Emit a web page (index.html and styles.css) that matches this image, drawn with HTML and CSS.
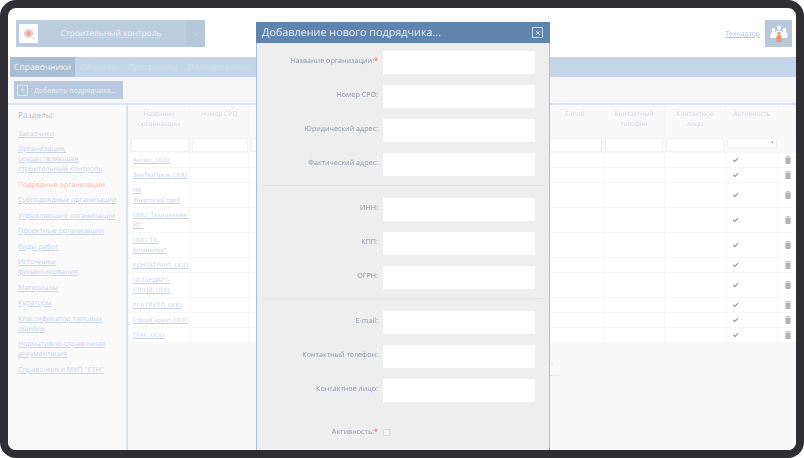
FILE: index.html
```html
<!DOCTYPE html>
<html lang="ru">
<head>
<meta charset="utf-8">
<title>Добавление нового подрядчика</title>
<link rel="stylesheet" href="styles.css">
</head>
<body>
<svg class="defs" width="0" height="0" aria-hidden="true">
  <symbol id="check" viewBox="0 0 8 7"><path d="M.6 3.900 2 2.800l1.200 1.400L6.600.8 7.600 1.800 3.200 6.400z"/></symbol>
  <symbol id="trash" viewBox="0 0 6 8"><path d="M2 0h2v.7h2v.8H0V.7h2zM.4 2h5.200v5.200c0 .5-.3.8-.8.8H1.200c-.5 0-.8-.3-.8-.8z"/></symbol>
</svg>
<div class="frame">
  <div class="app">
    <header class="top">
      <div class="project">
        <span class="logo">
          <svg width="12" height="12" viewBox="0 0 12 12"><circle cx="5.500" cy="5.500" r="4.600" fill="#f3cfc9"/><circle cx="5.500" cy="5.500" r="2.400" fill="#e9a79c"/><path d="M9 9l2.400 2.200" stroke="#dde3ea" stroke-width="1.300"/></svg>
        </span>
        <a class="project-name">Строительный контроль</a>
        <span class="project-arrow"><svg width="7" height="4" viewBox="0 0 7 4"><path d="M.5.5 3.500 3l3-2.500" fill="none" stroke="#c6d3e1" stroke-width=".8"/></svg></span>
      </div>
      <div class="user">
        <a class="user-name">Технадзор</a>
        <span class="avatar">
          <svg width="20" height="20" viewBox="0 0 20 20">
            <circle cx="4.500" cy="6" r="1.900" fill="#fff"/><path d="M1.500 14V10c0-1 .9-1.900 3-1.900s3 .9 3 1.900v4z" fill="#fff"/>
            <circle cx="15.500" cy="6" r="1.900" fill="#fff"/><path d="M12.500 14V10c0-1 .9-1.900 3-1.900s3 .9 3 1.900v4z" fill="#fff"/>
            <circle cx="10" cy="3.800" r="2" fill="#fff"/><path d="M6.500 9c0-1.500 1.500-2.500 3.500-2.500s3.500 1 3.500 2.500v2h-7z" fill="#fff"/>
            <circle cx="10" cy="9.500" r="1.800" fill="#f0a587"/><path d="M7.300 18v-3.800c0-1.500 1.200-2.500 2.700-2.500s2.700 1 2.700 2.500V18z" fill="#ee9572"/>
          </svg>
        </span>
      </div>
    </header>
    <nav class="nav">
      <a class="tab tab-active">Справочники</a>
      <a class="tab">Объекты</a>
      <a class="tab">Программы</a>
      <a class="tab">Планирование</a>
    </nav>
    <div class="toolbar">
      <button class="add" type="button"><span class="plus">+</span>Добавить подрядчика...</button>
    </div>
    <div class="main">
      <aside class="side">
        <h2 class="side-title">Разделы:</h2>
        <a class="side-link">Заказчики</a>
        <a class="side-link">Организация,<br>осуществляющая<br>строительный контроль</a>
        <a class="side-link side-current">Подрядные организации</a>
        <a class="side-link">Субподрядные организации</a>
        <a class="side-link">Управляющие организации</a>
        <a class="side-link">Проектные организации</a>
        <a class="side-link">Виды работ</a>
        <a class="side-link">Источники<br>финансирования</a>
        <a class="side-link">Материалы</a>
        <a class="side-link">Кураторы</a>
        <a class="side-link">Классификатор типовых<br>ошибок</a>
        <a class="side-link">Нормативно-справочная<br>документация</a>
        <a class="side-link">Справочники МУП "СТН"</a>
      </aside>
      <section class="content">
        <table class="grid">
          <colgroup>
            <col class="w-name"><col class="w-mid"><col class="w-mid"><col class="w-mid"><col class="w-mid"><col class="w-mid"><col class="w-mid">
            <col class="w-mail"><col class="w-name"><col class="w-name"><col class="w-act"><col class="w-del">
          </colgroup>
          <thead>
            <tr class="head">
              <th>Название организации</th><th>Номер СРО</th><th>Юридический адрес</th><th>Фактический адрес</th><th>ИНН</th><th>КПП</th><th>ОГРН</th><th>E-mail</th><th>Контактный телефон</th><th>Контактное лицо</th><th>Активность</th><th></th>
            </tr>
            <tr class="filters">
              <td><span class="filter"></span></td><td><span class="filter"></span></td><td><span class="filter"></span></td><td><span class="filter"></span></td><td><span class="filter"></span></td><td><span class="filter"></span></td><td><span class="filter"></span></td><td><span class="filter"></span></td><td><span class="filter"></span></td><td><span class="filter"></span></td>
              <td><span class="filter filter-select">▾</span></td><td></td>
            </tr>
          </thead>
          <tbody>
            <tr><td><a>Антекс, ООО</a></td><td></td><td></td><td></td><td></td><td></td><td></td><td></td><td></td><td></td><td class="act"><svg class="ico-check"><use href="#check"/></svg></td><td class="del"><svg class="ico-trash"><use href="#trash"/></svg></td></tr>
            <tr><td><a>ЗемТехПром, ООО</a></td><td></td><td></td><td></td><td></td><td></td><td></td><td></td><td></td><td></td><td class="act"><svg class="ico-check"><use href="#check"/></svg></td><td class="del"><svg class="ico-trash"><use href="#trash"/></svg></td></tr>
            <tr><td><a>НК<br>ЭнергогазСтрой</a></td><td></td><td></td><td></td><td></td><td></td><td></td><td></td><td></td><td></td><td class="act"><svg class="ico-check"><use href="#check"/></svg></td><td class="del"><svg class="ico-trash"><use href="#trash"/></svg></td></tr>
            <tr><td><a>ООО "Технохимия-<br>ИС"</a></td><td></td><td></td><td></td><td></td><td></td><td></td><td></td><td></td><td></td><td class="act"><svg class="ico-check"><use href="#check"/></svg></td><td class="del"><svg class="ico-trash"><use href="#trash"/></svg></td></tr>
            <tr><td><a>ООО "ГК<br>Биовектор"</a></td><td></td><td></td><td></td><td></td><td></td><td></td><td></td><td></td><td></td><td class="act"><svg class="ico-check"><use href="#check"/></svg></td><td class="del"><svg class="ico-trash"><use href="#trash"/></svg></td></tr>
            <tr><td><a>КОНТАТРАНТ, ООО</a></td><td></td><td></td><td></td><td></td><td></td><td></td><td></td><td></td><td></td><td class="act"><svg class="ico-check"><use href="#check"/></svg></td><td class="del"><svg class="ico-trash"><use href="#trash"/></svg></td></tr>
            <tr><td><a>ОСТАНДАРТ-<br>СТРОЙ, ООО</a></td><td></td><td></td><td></td><td></td><td></td><td></td><td></td><td></td><td></td><td class="act"><svg class="ico-check"><use href="#check"/></svg></td><td class="del"><svg class="ico-trash"><use href="#trash"/></svg></td></tr>
            <tr><td><a>РСА ГРУПП, ООО</a></td><td></td><td></td><td></td><td></td><td></td><td></td><td></td><td></td><td></td><td class="act"><svg class="ico-check"><use href="#check"/></svg></td><td class="del"><svg class="ico-trash"><use href="#trash"/></svg></td></tr>
            <tr><td><a>СтройГарант, ООО</a></td><td></td><td></td><td></td><td></td><td></td><td></td><td></td><td></td><td></td><td class="act"><svg class="ico-check"><use href="#check"/></svg></td><td class="del"><svg class="ico-trash"><use href="#trash"/></svg></td></tr>
            <tr><td><a>ТРАС, ООО</a></td><td></td><td></td><td></td><td></td><td></td><td></td><td></td><td></td><td></td><td class="act"><svg class="ico-check"><use href="#check"/></svg></td><td class="del"><svg class="ico-trash"><use href="#trash"/></svg></td></tr>
          </tbody>
        </table>
        <div class="pager"><span class="pager-text">5</span></div>
      </section>
    </div>
  </div>
  <div class="modal">
    <div class="modal-head">
      <span class="modal-title">Добавление нового подрядчика...</span>
      <span class="modal-close"><svg width="6" height="6" viewBox="0 0 6 6"><path d="M1 1l4 4M5 1 1 5" stroke="#e8eef5" stroke-width=".9"/></svg></span>
    </div>
    <form class="modal-body">
      <div class="group">
        <label class="field"><span class="label">Название организации:<b class="req">*</b></span><input class="input" type="text"></label>
        <label class="field"><span class="label">Номер СРО:</span><input class="input" type="text"></label>
        <label class="field"><span class="label">Юридический адрес:</span><input class="input" type="text"></label>
        <label class="field"><span class="label">Фактический адрес:</span><input class="input" type="text"></label>
      </div>
      <div class="group">
        <label class="field"><span class="label">ИНН:</span><input class="input" type="text"></label>
        <label class="field"><span class="label">КПП:</span><input class="input" type="text"></label>
        <label class="field"><span class="label">ОГРН:</span><input class="input" type="text"></label>
      </div>
      <div class="group group-last">
        <label class="field"><span class="label">E-mail:</span><input class="input" type="text"></label>
        <label class="field"><span class="label">Контактный телефон:</span><input class="input" type="text"></label>
        <label class="field"><span class="label">Контактное лицо:</span><input class="input" type="text"></label>
      </div>
      <label class="field field-check"><span class="label">Активность:<b class="req">*</b></span><span class="checkbox"></span></label>
    </form>
  </div>
</div>
</body>
</html>
```

FILE: styles.css
```css
* { box-sizing: border-box; }
html, body { margin: 0; padding: 0; background: #fff; }
body { width: 804px; height: 458px; overflow: hidden; font-family: "Open Sans", "Noto Sans", sans-serif; text-rendering: geometricPrecision; }
.defs { position: absolute; }
a { cursor: pointer; }

.frame {
  position: relative;
  width: 804px;
  height: 458px;
  border: 8px solid #2f2e33;
  border-radius: 16px;
  overflow: hidden;
  background: #fff;
}
.app { display: flex; flex-direction: column; height: 442px; filter: blur(.3px); }

.top { height: 49px; flex: none; display: flex; justify-content: space-between; padding: 12px 4px 0 8px; }
.project { width: 189px; height: 27px; background: #bccddf; display: flex; align-items: center; }
.logo { width: 19px; height: 19px; margin-left: 3px; background: #fff; display: flex; align-items: center; justify-content: center; }
.project-name { flex: 1; padding-right: 2px; text-align: center; font-size: 8.400px; color: #eef2f7; text-decoration: underline; text-decoration-color: #c6d4e3; }
.project-arrow { width: 19px; height: 27px; background: #b6c7d9; display: flex; align-items: center; justify-content: center; }
.user { display: flex; align-items: center; height: 27px; gap: 5px; }
.user-name { font-size: 6.800px; color: #a9c1dd; text-decoration: underline; }
.avatar { width: 27px; height: 27px; background: #b7c8da; display: flex; align-items: center; justify-content: center; }

.nav { height: 20px; flex: none; margin-left: 2px; background: #c5d6ea; display: flex; gap: 10px; }
.tab { font-size: 8.600px; line-height: 20px; color: #d3dfee; white-space: nowrap; }
.tab-active { width: 65px; padding: 0 4px; background: #aabdd2; color: #f3f6fa; margin-right: -5px; }

.toolbar { height: 26px; flex: none; margin-left: 2px; padding: 4px 4px 0; background: #f8f7f8; }
.add {
  width: 109px; height: 18px; padding: 0 0 0 3px; border: 0; background: #b9cadf;
  display: flex; align-items: center; gap: 6px; white-space: nowrap;
  font: 7.100px "Open Sans", sans-serif; color: #e9eff6;
}
.plus { width: 11px; height: 11px; flex: none; border: 1px solid #dbe5f0; font-size: 9px; line-height: 8px; text-align: center; color: #e6edf5; }

.main { flex: 1; display: flex; min-height: 0; border-top: 2px solid #dde4ee; background: #f9f9fa; }
.side { width: 120px; flex: none; padding: 4px 4px 0 10px; border-right: 2px solid #dbe2ee; background: #fafafb; display: flex; flex-direction: column; align-items: flex-start; gap: 5.500px; }
.side-title { margin: 0; font-size: 8.300px; line-height: 14px; font-weight: 400; color: #b8bec9; }
.side-link { font-size: 7.100px; line-height: 10px; color: #cbd4e5; text-decoration: underline; white-space: nowrap; }
.side-current { color: #f6b9b0; text-decoration: none; }

.content { flex: 1; min-width: 0; padding-left: 1px; }
.grid { width: 667px; table-layout: fixed; border-collapse: separate; border-spacing: 0; background: #fff; font-size: 6px; line-height: 10px; }
.w-name { width: 61px; }
.w-mid { width: 59.330px; }
.w-mail { width: 58px; }
.w-act { width: 53px; }
.w-del { width: 17px; }
.head { height: 33px; background: #f9f9fa; }
.head th { padding: 4px 5px 0; vertical-align: top; font-weight: 400; font-size: 6.600px; line-height: 10px; text-align: center; color: #d3d6dd; border-right: 1px solid #f6f6f7; }
.filters td { height: 15px; padding: 0 1.500px; vertical-align: top; background: #f9f9fa; }
.filter { display: block; height: 14px; background: #fff; border: 1px solid #f2f2f4; }
.filter-select { width: 50px; height: 10px; font-size: 5px; line-height: 8px; text-align: right; padding-right: 3px; color: #a9a9a9; }
tbody td { padding: 2px 2px 2px 4px; border-right: 1px solid #f8f8f9; border-bottom: 1px solid #f7f7f8; vertical-align: middle; white-space: nowrap; overflow: hidden; }
tbody a { color: #c6d0e2; text-decoration: underline; }
tbody td.act { padding: 0 0 0 6px; }
tbody td.del { padding: 0 0 0 6px; border-right: 0; }
.ico-check { display: block; width: 7px; height: 6px; fill: #a0a0a0; }
.ico-trash { display: block; width: 6px; height: 8px; fill: #b3b3b3; }

.pager { width: 260px; margin: 17px 0 0 171px; height: 16px; padding-right: 7px; text-align: right; border-bottom: 1px solid #e6e6e9; font-size: 7px; color: #dfe5ef; }
.pager-text { display: inline-block; line-height: 10px; }

.modal { position: absolute; left: 248px; top: 14px; width: 294px; height: 440px; border-left: 1px solid #a9c0dc; border-right: 1px solid #a9c0dc; background: #eee; filter: blur(.3px); }
.modal-head { height: 21px; margin: 0 -1px; padding: 0 7px 0 6px; background: #5f84ad; display: flex; align-items: center; justify-content: space-between; }
.modal-title { font-size: 10.800px; color: #e9eff6; white-space: nowrap; }
.modal-close { width: 11px; height: 11px; border: 1px solid #c9d7e6; display: flex; align-items: center; justify-content: center; }
.modal-body { padding-top: 8px; }
.group { margin: 0 6px 12px; padding: 0 0 9px; border-bottom: 1px solid #e4e4e4; display: flex; flex-direction: column; gap: 11px; }
.group-last { border-bottom: 0; margin-bottom: 0; padding-bottom: 0; }
.field { display: flex; gap: 5px; }
.label { width: 115px; flex: none; padding-top: 4.500px; text-align: right; font-size: 7.200px; line-height: 10px; color: #8c98ac; white-space: nowrap; }
.req { font-weight: 400; color: #e0405a; }
.input { width: 152px; height: 23px; border: 0; padding: 0; background: #fff; }
.field-check { margin: 25px 6px 0; align-items: center; }
.field-check .label { padding-top: 0; }
.checkbox { width: 7px; height: 7px; border: 1px solid #dcdcdc; background: #f4f4f4; }
```
